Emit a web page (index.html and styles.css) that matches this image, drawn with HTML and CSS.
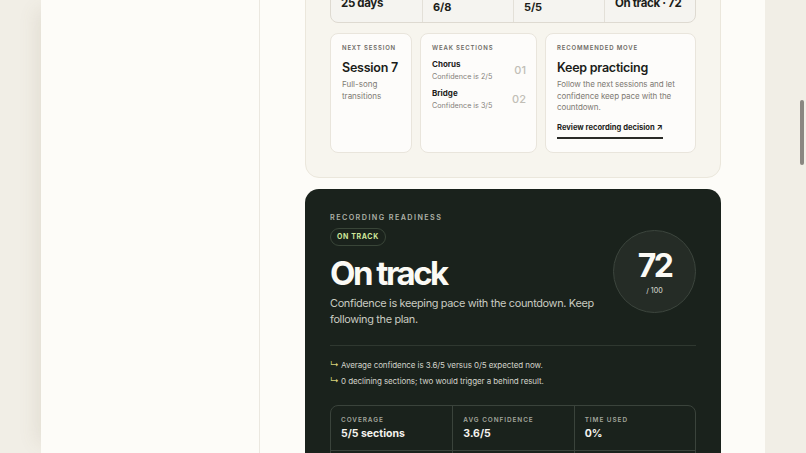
FILE: index.html
```html
<!DOCTYPE html>
<html lang="en">
<head>
<meta charset="utf-8">
<title>Recording readiness</title>
<link rel="stylesheet" href="styles.css">
</head>
<body>
<div class="shell">
  <aside class="sidebar"></aside>
  <main class="content">
    <section class="summary">
      <div class="stats">
        <div class="stat stat-big"><span class="stat-value">25 days</span></div>
        <div class="stat"><span class="stat-value">6/8</span></div>
        <div class="stat"><span class="stat-value">5/5</span></div>
        <div class="stat stat-big"><span class="stat-value">On track · 72</span></div>
      </div>
      <div class="cards">
        <div class="card">
          <div class="card-label">Next session</div>
          <div class="card-title">Session 7</div>
          <p class="card-text">Full-song transitions</p>
        </div>
        <div class="card">
          <div class="card-label">Weak sections</div>
          <div class="weak-list">
            <div class="weak-row">
              <div class="weak-info"><div class="weak-name">Chorus</div><div class="weak-sub">Confidence is 2/5</div></div>
              <div class="weak-num">01</div>
            </div>
            <div class="weak-row">
              <div class="weak-info"><div class="weak-name">Bridge</div><div class="weak-sub">Confidence is 3/5</div></div>
              <div class="weak-num">02</div>
            </div>
          </div>
        </div>
        <div class="card">
          <div class="card-label">Recommended move</div>
          <div class="card-title">Keep practicing</div>
          <p class="card-text card-text-wide">Follow the next sessions and let confidence keep pace with the countdown.</p>
          <a class="card-link" href="#">Review recording decision <span class="arrow">↗</span></a>
        </div>
      </div>
    </section>

    <section class="readiness">
      <div class="ready-head">
        <div class="ready-main">
          <div class="ready-label">Recording readiness</div>
          <span class="pill">On track</span>
          <h1 class="ready-title">On track</h1>
          <p class="ready-text">Confidence is keeping pace with the countdown. Keep following the plan.</p>
        </div>
        <div class="score">
          <span class="score-num">72</span>
          <span class="score-max">/ 100</span>
        </div>
      </div>
      <ul class="reasons">
        <li><span class="reason-arrow">↳</span>Average confidence is 3.6/5 versus 0/5 expected now.</li>
        <li><span class="reason-arrow">↳</span>0 declining sections; two would trigger a behind result.</li>
      </ul>
      <div class="metrics">
        <div class="metric"><span class="metric-label">Coverage</span><span class="metric-value">5/5 sections</span></div>
        <div class="metric"><span class="metric-label">Avg confidence</span><span class="metric-value">3.6/5</span></div>
        <div class="metric"><span class="metric-label">Time used</span><span class="metric-value">0%</span></div>
        <div class="metric"><span class="metric-label">Sessions</span><span class="metric-value">6/8</span></div>
        <div class="metric"><span class="metric-label">Declining</span><span class="metric-value">0</span></div>
        <div class="metric"><span class="metric-label">Days left</span><span class="metric-value">25</span></div>
      </div>
    </section>
  </main>
</div>
<div class="scroll-thumb"></div>
</body>
</html>
```

FILE: styles.css
```css
* { box-sizing: border-box; }

html, body {
  margin: 0;
  height: 453px;
  overflow: hidden;
}

body {
  background: #f1eee6;
  font-family: "Inter", "Liberation Sans", sans-serif;
  color: #1d1f1b;
}

.shell {
  margin-left: 41px;
  width: 724px;
  height: 453px;
  background: #fdfcf8;
  display: grid;
  grid-template-columns: 219px 1fr;
  box-shadow: -14px 0 18px -10px rgba(120, 105, 70, 0.12);
}

.sidebar {
  border-right: 1px solid #ebe8e0;
}

.content {
  padding: 0 44px 0 45px;
}

/* ---------- summary card ---------- */
.summary {
  margin-top: -63px;
  background: #f7f5ee;
  border: 1px solid #ebe7dc;
  border-radius: 14px;
  padding: 24px 24px 24px;
}

.stats {
  display: grid;
  grid-template-columns: repeat(4, minmax(0, 1fr));
  background: #f5f4f0;
  border: 1px solid #dedad1;
  border-radius: 8px;
  height: 61px;
}

.stat {
  display: flex;
  flex-direction: column;
  justify-content: flex-end;
  padding: 0 6px 8px 10px;
  border-left: 1px solid #e3e0d8;
  white-space: nowrap;
}
.stat:first-child { border-left: 0; }

.stat-value {
  font-size: 11px;
  font-weight: 700;
  letter-spacing: -0.01em;
  color: #1c1d1a;
}

.stat-big { padding-bottom: 12px; }
.stat-big .stat-value { font-size: 11.5px; letter-spacing: -0.03em; }

.cards {
  margin-top: 10px;
  display: grid;
  grid-template-columns: 82px 117px 1fr;
  gap: 8px;
}

.card {
  height: 120px;
  background: #fdfcfa;
  border: 1px solid #e9e5dc;
  border-radius: 8px;
  padding: 10px 10px 0 11px;
}

.card-label {
  font-size: 6px;
  font-weight: 600;
  letter-spacing: 0.14em;
  text-transform: uppercase;
  color: #6d6a64;
  white-space: nowrap;
}

.card-title {
  margin-top: 9px;
  font-size: 12.5px;
  font-weight: 600;
  letter-spacing: -0.02em;
  color: #1b1c19;
  white-space: nowrap;
}

.card-text {
  margin: 3px 0 0;
  font-size: 8px;
  line-height: 12px;
  color: #7e7a73;
}
.card-text-wide { margin-top: 4px; line-height: 11.5px; letter-spacing: -0.01em; }

.card-link {
  display: inline-block;
  margin-top: 8px;
  font-size: 7.6px;
  font-weight: 700;
  color: #1d1e1b;
  text-decoration: none;
  padding-bottom: 5px;
  border-bottom: 2px solid #2a2b27;
  white-space: nowrap;
}
.arrow { font-size: 8px; }

.weak-list {
  margin-top: 8px;
  display: flex;
  flex-direction: column;
  gap: 7px;
}

.weak-row {
  display: flex;
  align-items: center;
  justify-content: space-between;
}

.weak-name {
  font-size: 8px;
  font-weight: 700;
  color: #1d1e1b;
}

.weak-sub {
  margin-top: 3px;
  font-size: 7.2px;
  color: #85817a;
}

.weak-num {
  font-size: 11px;
  font-weight: 500;
  color: #c1beb6;
}

/* ---------- readiness card ---------- */
.readiness {
  margin-top: 11px;
  background: #1a221c;
  border-radius: 14px;
  padding: 24px 25px 20px;
  color: #f4f3ee;
}

.ready-head {
  display: flex;
  justify-content: space-between;
  align-items: flex-start;
}

.ready-label {
  font-size: 7.2px;
  font-weight: 600;
  letter-spacing: 0.2em;
  text-transform: uppercase;
  color: #aeb1a7;
  margin-top: 0;
}

.pill {
  display: inline-block;
  margin-top: 6px;
  height: 18px;
  line-height: 16px;
  padding: 0 6px;
  border: 1px solid #394538;
  border-radius: 9px;
  font-size: 7px;
  font-weight: 700;
  letter-spacing: 0.09em;
  text-transform: uppercase;
  color: #cfe79b;
}

.ready-title {
  margin: 8px 0 0;
  font-size: 33px;
  line-height: 38px;
  font-weight: 700;
  letter-spacing: -0.075em;
  color: #fbfaf5;
}

.ready-text {
  margin: 3px 0 0;
  width: 272px;
  font-size: 10.9px;
  line-height: 16px;
  letter-spacing: -0.03em;
  color: #c9cbc1;
}

.score {
  margin-top: 17px;
  width: 83px;
  height: 83px;
  border-radius: 50%;
  background: #252c26;
  border: 1px solid #3c453d;
  display: flex;
  flex-direction: column;
  align-items: center;
  justify-content: center;
}

.score-num {
  font-size: 32px;
  line-height: 34px;
  font-weight: 700;
  letter-spacing: -0.08em;
  color: #fbfaf5;
}

.score-max {
  margin-top: 3px;
  font-size: 7px;
  font-weight: 500;
  color: #c9cbc1;
}

.reasons {
  list-style: none;
  margin: 18px 0 0;
  padding: 11px 0 0;
  border-top: 1px solid #2f3830;
}

.reasons li {
  font-size: 8px;
  line-height: 16px;
  letter-spacing: -0.01em;
  color: #d2d3ca;
}

.reason-arrow {
  display: inline-block;
  width: 11px;
  color: #d6d07a;
  font-size: 9px;
}

.metrics {
  margin-top: 16px;
  display: grid;
  grid-template-columns: repeat(3, 1fr);
  border: 1px solid #3a433b;
  border-radius: 8px;
}

.metric {
  display: flex;
  flex-direction: column;
  padding: 10px 10px 10px;
  border-left: 1px solid #3a433b;
}
.metric:nth-child(3n+1) { border-left: 0; }
.metric:nth-child(n+4) { border-top: 1px solid #3a433b; }

.metric-label {
  font-size: 6.4px;
  font-weight: 600;
  letter-spacing: 0.15em;
  text-transform: uppercase;
  color: #a3a69c;
}

.metric-value {
  margin-top: 3px;
  font-size: 10.5px;
  font-weight: 700;
  color: #f4f3ee;
}

.scroll-thumb {
  position: fixed;
  top: 100px;
  right: 2px;
  width: 4px;
  height: 65px;
  border-radius: 2px;
  background: #8a8781;
}
```
